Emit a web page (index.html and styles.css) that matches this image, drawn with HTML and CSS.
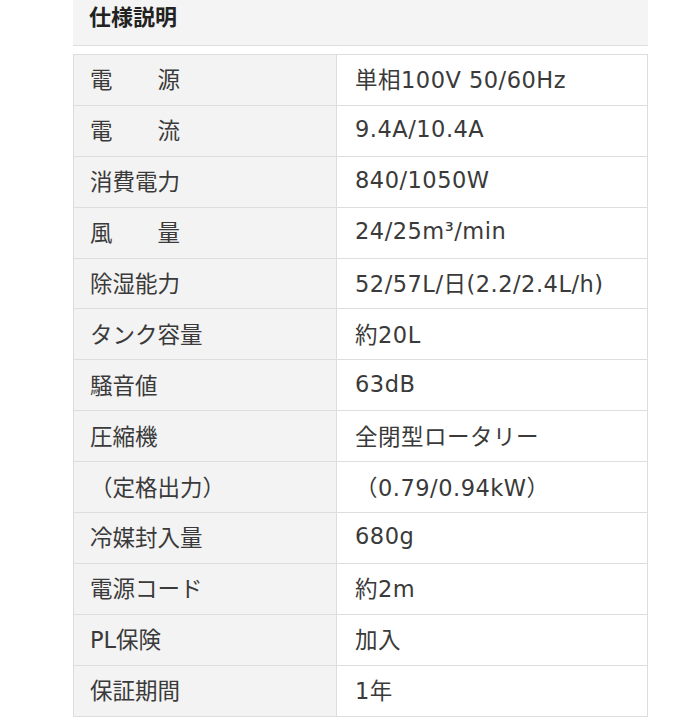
FILE: index.html
```html
<!DOCTYPE html>
<html lang="ja">
<head>
<meta charset="utf-8">
<title>仕様説明</title>
<link rel="stylesheet" href="styles.css">
</head>
<body>
<div class="spec">
  <div class="spec-title">仕様説明</div>
  <table class="spec-table">
    <tr><th>電　　源</th><td>単相100V 50/60Hz</td></tr>
    <tr><th>電　　流</th><td>9.4A/10.4A</td></tr>
    <tr><th>消費電力</th><td>840/1050W</td></tr>
    <tr><th>風　　量</th><td>24/25m³/min</td></tr>
    <tr><th>除湿能力</th><td>52/57L/日(2.2/2.4L/h)</td></tr>
    <tr><th>タンク容量</th><td>約20L</td></tr>
    <tr><th>騒音値</th><td>63dB</td></tr>
    <tr><th>圧縮機</th><td>全閉型ロータリー</td></tr>
    <tr><th>（定格出力）</th><td>（0.79/0.94kW）</td></tr>
    <tr><th>冷媒封入量</th><td>680g</td></tr>
    <tr><th>電源コード</th><td>約2m</td></tr>
    <tr><th>PL保険</th><td>加入</td></tr>
    <tr><th>保証期間</th><td>1年</td></tr>
  </table>
</div>
</body>
</html>
```

FILE: styles.css
```css
html, body {
  margin: 0;
  padding: 0;
  background: #ffffff;
}

body {
  font-family: "Noto Sans CJK JP", "Noto Sans", sans-serif;
  color: #333333;
}

.spec {
  width: 575px;
  margin-left: 73px;
}

.spec-title {
  height: 46px;
  box-sizing: border-box;
  background: #f4f4f4;
  border-bottom: 1px solid #dedede;
  padding: 3px 0 0 16px;
  font-size: 22px;
  font-weight: bold;
  line-height: 24px;
  color: #222222;
  margin-bottom: 8px;
}

.spec-table {
  width: 575px;
  border-collapse: collapse;
  table-layout: fixed;
  font-family: "DejaVu Sans", "Noto Sans CJK JP", sans-serif;
  font-size: 22.5px;
  color: #3a3a3a;
}

.spec-table tr {
  height: 50.9px;
}

.spec-table th,
.spec-table td {
  border: 1px solid #dddddd;
  padding: 0 0 3px 0;
  text-align: left;
  font-weight: normal;
  vertical-align: middle;
  white-space: nowrap;
}

.spec-table th {
  width: 246px;
  padding-left: 16px;
  background: #f3f3f3;
}

.spec-table td {
  padding-left: 18px;
  background: #ffffff;
  letter-spacing: 0.5px;
}
```
